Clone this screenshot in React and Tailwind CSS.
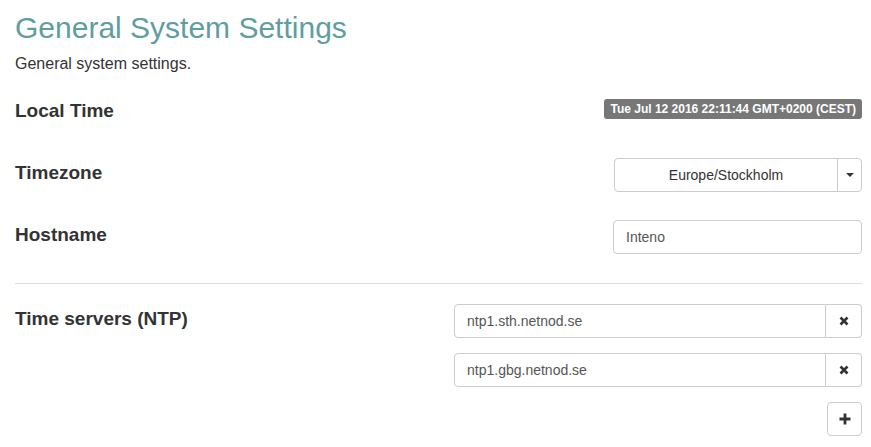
import React from 'react'

const font = {fontFamily: '"Liberation Sans", Arial, Helvetica, sans-serif'}

function RemoveIcon() {
  return (
    <svg width="10" height="10" viewBox="0 0 10 10" className="block">
      <path d="M1.5 1.5 L8.5 8.5 M8.5 1.5 L1.5 8.5" stroke="#333" strokeWidth="2.6" strokeLinecap="butt" />
    </svg>
  )
}

function PlusIcon() {
  return (
    <svg width="12" height="12" viewBox="0 0 12 12" className="block">
      <path d="M6 0.5 V11.5 M0.5 6 H11.5" stroke="#333" strokeWidth="2.8" />
    </svg>
  )
}

function Heading({children}) {
  return <h4 className="mt-[5px] text-[19px] leading-[20px] font-bold text-[#333]">{children}</h4>
}

function NtpServer({value}) {
  return (
    <div className="flex h-[34px] w-[408px]">
      <div className="flex flex-1 items-center border border-[#ccc] rounded-l-[4px] px-3 text-[14px] text-[#555]">
        {value}
      </div>
      <button className="flex w-[36px] items-center justify-center border border-l-0 border-[#ccc] rounded-r-[4px] bg-white">
        <RemoveIcon />
      </button>
    </div>
  )
}

export default function App() {
  return (
    <div className="w-[871px] h-[447px] bg-white pl-[15px] pr-[9px] pt-[11px] overflow-hidden" style={font}>
      <h1 className="text-[30px] leading-[33px] text-[#5f9ea0]">General System Settings</h1>
      <p className="mt-[10px] text-[16px] leading-[20px] text-[#333]">General system settings.</p>

      <div className="mt-[22px] flex h-[34px] items-start justify-between">
        <Heading>Local Time</Heading>
        <span className="mt-[3px] rounded-[3px] bg-[#777] px-[6px] pt-[3px] pb-[3px] text-[12px] leading-[14px] font-bold text-white">
          Tue Jul 12 2016 22:11:44 GMT+0200 (CEST)
        </span>
      </div>

      <div className="mt-[28px] flex h-[34px] items-start justify-between">
        <Heading>Timezone</Heading>
        <div className="flex h-[34px] w-[248px] rounded-[4px] border border-[#ccc]">
          <div className="flex flex-1 items-center justify-center text-[14px] text-[#333]">Europe/Stockholm</div>
          <div className="flex w-[24px] items-center justify-center border-l border-[#ccc]">
            <svg width="8" height="4" viewBox="0 0 8 4" className="block">
              <path d="M0 0 H8 L4 4 Z" fill="#333" />
            </svg>
          </div>
        </div>
      </div>

      <div className="mt-[28px] flex h-[34px] items-start justify-between">
        <Heading>Hostname</Heading>
        <div className="flex h-[34px] w-[249px] items-center rounded-[4px] border border-[#ccc] px-3 text-[14px] text-[#555]">
          Inteno
        </div>
      </div>

      <hr className="mt-[29px] border-0 border-t border-[#ddd]" />

      <div className="mt-[20px] flex items-start justify-between">
        <Heading>Time servers (NTP)</Heading>
        <div className="flex flex-col items-end gap-[15px]">
          <NtpServer value="ntp1.sth.netnod.se" />
          <NtpServer value="ntp1.gbg.netnod.se" />
          <button className="flex h-[34px] w-[35px] items-center justify-center rounded-[4px] border border-[#ccc] bg-white">
            <PlusIcon />
          </button>
        </div>
      </div>
    </div>
  )
}
